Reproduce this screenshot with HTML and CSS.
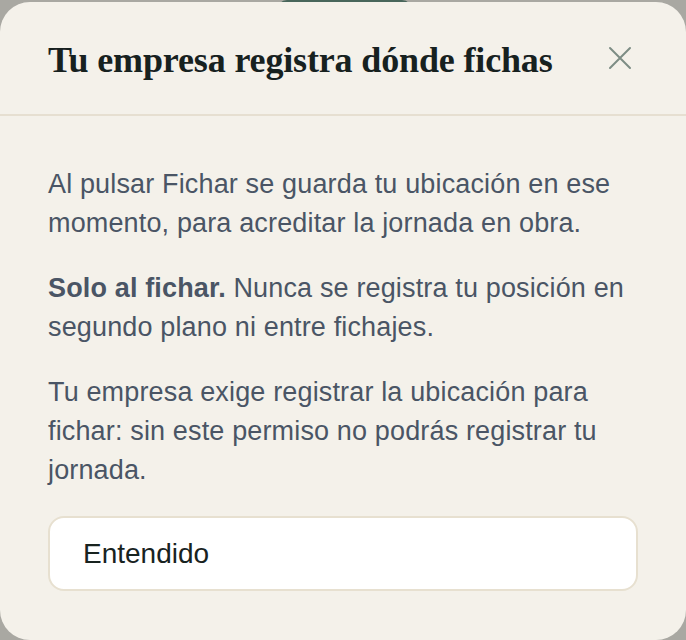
FILE: index.html
```html
<!DOCTYPE html>
<html lang="es">
<head>
<meta charset="utf-8">
<title>Ubicación</title>
<link rel="stylesheet" href="styles.css">
</head>
<body>
<div class="backdrop-pill"></div>
<div class="sheet" role="dialog" aria-labelledby="t">
  <header class="sheet-header">
    <h2 id="t" class="sheet-title">Tu empresa registra dónde fichas</h2>
    <button class="close-btn" aria-label="Cerrar">
      <svg width="24" height="24" viewBox="0 0 24 24" fill="none" stroke="currentColor" stroke-width="2" stroke-linecap="round"><path d="M2 2L22 22M22 2L2 22"/></svg>
    </button>
  </header>
  <div class="sheet-body">
    <p>Al pulsar Fichar se guarda tu ubicación en ese momento, para acreditar la jornada en obra.</p>
    <p><strong>Solo al fichar.</strong> Nunca se registra tu posición en segundo plano ni entre fichajes.</p>
    <p>Tu empresa exige registrar la ubicación para fichar: sin este permiso no podrás registrar tu jornada.</p>
    <button class="ok-btn">Entendido</button>
  </div>
</div>
</body>
</html>
```
FILE: styles.css
```css
html, body {
  margin: 0;
  height: 100%;
}
body {
  background: #a9a8a2;
  overflow: hidden;
  position: relative;
}
.backdrop-pill {
  position: absolute;
  left: 277px;
  top: 0;
  width: 135px;
  height: 20px;
  border-radius: 10px;
  background: #48665b;
}
.sheet {
  position: relative;
  margin-top: 2px;
  height: 638px;
  background: #f4f1ea;
  border-radius: 30px;
  display: flex;
  flex-direction: column;
}
.sheet-header {
  height: 112px;
  border-bottom: 2px solid #e6dfd1;
  display: flex;
  align-items: center;
  justify-content: space-between;
  padding: 0 48px;
}
.sheet-title {
  margin: 4px 0 0;
  font-family: "Liberation Serif", "DejaVu Serif", serif;
  font-weight: 700;
  font-size: 36px;
  color: #17211f;
  letter-spacing: -0.15px;
}
.close-btn {
  border: 0;
  background: none;
  padding: 0;
  color: #7d8d85;
  width: 24px;
  height: 24px;
  margin-right: 6px;
  display: flex;
}
.sheet-body {
  padding: 49px 48px 0;
  font-family: "Liberation Sans", Arial, sans-serif;
  font-size: 27px;
  line-height: 39px;
  letter-spacing: 0.15px;
  color: #4a5565;
}
.sheet-body p {
  margin: 0 0 26px;
}
.sheet-body strong {
  font-weight: 700;
}
.ok-btn {
  display: block;
  width: 100%;
  height: 75px;
  margin-top: 0;
  background: #fff;
  border: 2px solid #e7e0d0;
  border-radius: 16px;
  text-align: left;
  padding: 0 33px;
  font-family: "Liberation Sans", Arial, sans-serif;
  font-size: 28px;
  color: #18231f;
}
```
